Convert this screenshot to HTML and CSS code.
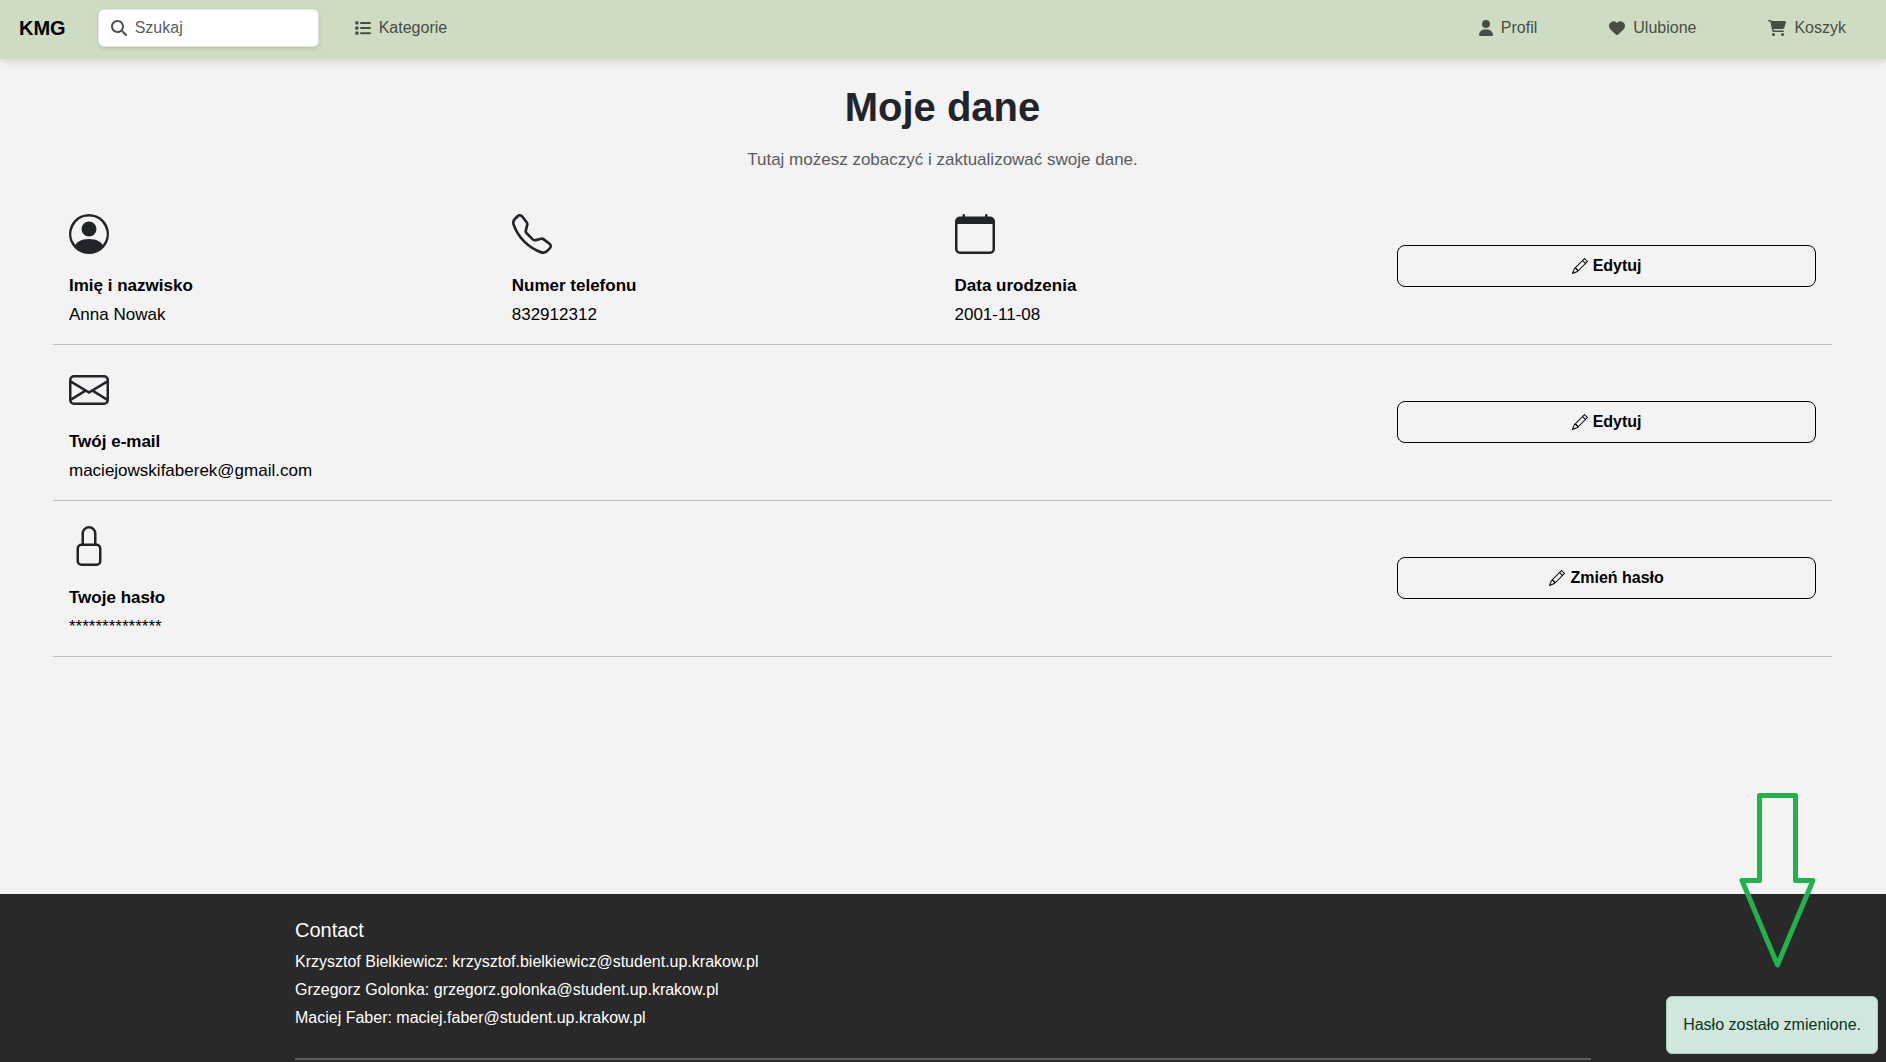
FILE: index.html
```html
<!DOCTYPE html>
<html lang="pl">
<head>
  <meta charset="utf-8">
  <meta name="viewport" content="width=device-width, initial-scale=1">
  <title>KMG – Moje dane</title>
  <link rel="stylesheet" href="styles.css">
</head>
<body>
  <svg class="sprite" aria-hidden="true">
    <symbol id="pencil" viewBox="0 0 16 16"><path d="M12.146.146a.5.5 0 0 1 .708 0l3 3a.5.5 0 0 1 0 .708l-10 10a.5.5 0 0 1-.168.11l-5 2a.5.5 0 0 1-.65-.65l2-5a.5.5 0 0 1 .11-.168zM11.207 2.5 13.5 4.793 14.793 3.5 12.5 1.207zm1.586 3L10.5 3.207 4 9.707V10h.5a.5.5 0 0 1 .5.5v.5h.5a.5.5 0 0 1 .5.5v.5h.293zm-9.761 5.175-.106.106-1.528 3.821 3.821-1.528.106-.106A.5.5 0 0 1 5 12.5V12h-.5a.5.5 0 0 1-.5-.5V11h-.5a.5.5 0 0 1-.468-.325"/></symbol>
  </svg>

  <header class="navbar">
    <a class="brand" href="#">KMG</a>
    <form class="search" role="search">
      <label class="search-label" for="search" aria-label="Szukaj">
        <svg class="nav-icon" viewBox="0 0 512 512" width="16" height="16"><path d="M416 208c0 45.900-14.900 88.300-40 122.700L502.600 457.400c12.500 12.500 12.500 32.800 0 45.300s-32.800 12.500-45.300 0L330.700 376c-34.400 25.200-76.800 40-122.700 40C93.100 416 0 322.900 0 208S93.100 0 208 0S416 93.100 416 208zM208 352a144 144 0 1 0 0-288 144 144 0 1 0 0 288z"/></svg>
      </label>
      <input class="search-input" id="search" type="search" placeholder="Szukaj">
    </form>
    <nav class="nav nav-start">
      <a class="nav-link" href="#">
        <svg class="nav-icon" viewBox="0 0 512 512" width="16" height="16"><rect x="8" y="40" width="104" height="104" rx="24"/><rect x="8" y="204" width="104" height="104" rx="24"/><rect x="8" y="368" width="104" height="104" rx="24"/><rect x="160" y="60" width="352" height="64" rx="32"/><rect x="160" y="224" width="352" height="64" rx="32"/><rect x="160" y="388" width="352" height="64" rx="32"/></svg>
        Kategorie
      </a>
    </nav>
    <nav class="nav nav-end">
      <a class="nav-link" href="#">
        <svg class="nav-icon" viewBox="0 0 448 512" width="14" height="16"><path d="M224 256A128 128 0 1 0 224 0a128 128 0 1 0 0 256zm-45.700 48C79.800 304 0 383.800 0 482.300C0 498.700 13.300 512 29.700 512H418.300c16.400 0 29.700-13.300 29.700-29.700C448 383.800 368.200 304 269.700 304H178.300z"/></svg>
        Profil
      </a>
      <a class="nav-link" href="#">
        <svg class="nav-icon" viewBox="0 0 512 512" width="16" height="16"><path d="M47.600 300.400L228.300 469.100c7.500 7 17.400 10.900 27.700 10.900s20.200-3.900 27.700-10.900L464.400 300.400c30.400-28.300 47.600-68 47.600-109.500v-5.800c0-69.900-50.500-129.500-119.400-141C347 36.500 300.600 51.400 268 84L256 96 244 84c-32.600-32.600-79-47.500-124.600-39.900C50.500 55.600 0 115.200 0 185.100v5.800c0 41.500 17.200 81.200 47.600 109.500z"/></svg>
        Ulubione
      </a>
      <a class="nav-link" href="#">
        <svg class="nav-icon" viewBox="0 0 576 512" width="18" height="16"><path d="M0 24C0 10.700 10.700 0 24 0H69.500c22 0 41.500 12.800 50.600 32h411c26.300 0 45.500 25 38.600 50.400l-41 152.300c-8.500 31.400-37 53.300-69.500 53.300H170.700l5.400 28.500c2.200 11.300 12.100 19.500 23.600 19.500H488c13.300 0 24 10.700 24 24s-10.700 24-24 24H199.700c-34.600 0-64.300-24.600-70.700-58.500L77.400 54.500c-.7-3.800-4-6.500-7.900-6.500H24C10.700 48 0 37.300 0 24zM128 464a48 48 0 1 1 96 0 48 48 0 1 1 -96 0zm336-48a48 48 0 1 1 0 96 48 48 0 1 1 0-96z"/></svg>
        Koszyk
      </a>
    </nav>
  </header>

  <main class="main">
    <h1 class="title">Moje dane</h1>
    <p class="lead">Tutaj możesz zobaczyć i zaktualizować swoje dane.</p>

    <section class="row">
      <div class="field">
        <svg class="field-icon" viewBox="0 0 16 16"><path d="M11 6a3 3 0 1 1-6 0 3 3 0 0 1 6 0"/><path fill-rule="evenodd" d="M0 8a8 8 0 1 1 16 0A8 8 0 0 1 0 8m8-7a7 7 0 0 0-5.468 11.370C3.242 11.226 4.805 10 8 10s4.757 1.225 5.468 2.370A7 7 0 0 0 8 1"/></svg>
        <h2 class="field-name">Imię i nazwisko</h2>
        <p class="field-value">Anna Nowak</p>
      </div>
      <div class="field">
        <svg class="field-icon" viewBox="0 0 16 16"><path d="M3.654 1.328a.678.678 0 0 0-1.015-.063L1.605 2.300c-.483.484-.661 1.169-.45 1.770a17.600 17.600 0 0 0 4.168 6.608 17.600 17.600 0 0 0 6.608 4.168c.601.211 1.286.033 1.770-.45l1.034-1.034a.678.678 0 0 0-.063-1.015l-2.307-1.794a.68.68 0 0 0-.58-.122l-2.190.547a1.750 1.750 0 0 1-1.657-.459L5.482 8.062a1.750 1.750 0 0 1-.46-1.657l.548-2.190a.68.68 0 0 0-.122-.58zM1.884.511a1.745 1.745 0 0 1 2.612.163L6.290 2.980c.329.423.445.974.315 1.494l-.547 2.190a.68.68 0 0 0 .178.643l2.457 2.457a.68.68 0 0 0 .644.178l2.189-.547a1.750 1.750 0 0 1 1.494.315l2.306 1.794c.829.645.905 1.870.163 2.611l-1.034 1.034c-.74.74-1.846 1.065-2.877.702a18.600 18.600 0 0 1-7.010-4.420 18.600 18.600 0 0 1-4.420-7.009c-.362-1.030-.037-2.137.703-2.877z"/></svg>
        <h2 class="field-name">Numer telefonu</h2>
        <p class="field-value">832912312</p>
      </div>
      <div class="field">
        <svg class="field-icon" viewBox="0 0 16 16"><path d="M3.500 0a.5.5 0 0 1 .5.5V1h8V.5a.5.5 0 0 1 1 0V1h1a2 2 0 0 1 2 2v11a2 2 0 0 1-2 2H2a2 2 0 0 1-2-2V3a2 2 0 0 1 2-2h1V.5a.5.5 0 0 1 .5-.5M1 4v10a1 1 0 0 0 1 1h12a1 1 0 0 0 1-1V4z"/></svg>
        <h2 class="field-name">Data urodzenia</h2>
        <p class="field-value">2001-11-08</p>
      </div>
      <button class="btn" type="button"><svg class="btn-icon"><use href="#pencil"/></svg>Edytuj</button>
    </section>

    <section class="row">
      <div class="field">
        <svg class="field-icon" viewBox="0 0 16 16"><path d="M0 4a2 2 0 0 1 2-2h12a2 2 0 0 1 2 2v8a2 2 0 0 1-2 2H2a2 2 0 0 1-2-2zm2-1a1 1 0 0 0-1 1v.217l7 4.200 7-4.200V4a1 1 0 0 0-1-1zm13 2.383-4.708 2.825L15 11.105zm-.034 6.876-5.640-3.471L8 9.583l-1.326-.795-5.640 3.470A1 1 0 0 0 2 13h12a1 1 0 0 0 .966-.741M1 11.105l4.708-2.897L1 5.383z"/></svg>
        <h2 class="field-name">Twój e-mail</h2>
        <p class="field-value">maciejowskifaberek@gmail.com</p>
      </div>
      <button class="btn" type="button"><svg class="btn-icon"><use href="#pencil"/></svg>Edytuj</button>
    </section>

    <section class="row">
      <div class="field">
        <svg class="field-icon" viewBox="0 0 16 16"><path fill-rule="evenodd" d="M8 1a2 2 0 0 1 2 2v4H6V3a2 2 0 0 1 2-2m3 6V3a3 3 0 0 0-6 0v4a2 2 0 0 0-2 2v5a2 2 0 0 0 2 2h6a2 2 0 0 0 2-2V9a2 2 0 0 0-2-2M5 8h6a1 1 0 0 1 1 1v5a1 1 0 0 1-1 1H5a1 1 0 0 1-1-1V9a1 1 0 0 1 1-1"/></svg>
        <h2 class="field-name">Twoje hasło</h2>
        <p class="field-value">**************</p>
      </div>
      <button class="btn" type="button"><svg class="btn-icon"><use href="#pencil"/></svg>Zmień hasło</button>
    </section>
  </main>

  <footer class="footer">
    <div class="container">
      <h2 class="footer-title">Contact</h2>
      <p class="footer-line">Krzysztof Bielkiewicz: krzysztof.bielkiewicz@student.up.krakow.pl</p>
      <p class="footer-line">Grzegorz Golonka: grzegorz.golonka@student.up.krakow.pl</p>
      <p class="footer-line">Maciej Faber: maciej.faber@student.up.krakow.pl</p>
      <hr class="footer-rule">
    </div>
  </footer>

  <svg class="arrow" viewBox="0 0 80 177" aria-hidden="true"><path d="M21.500 3.500H57.500V88.500H75L39.500 173 4 88.500H21.500Z"/></svg>
  <div class="toast" role="alert">Hasło zostało zmienione.</div>
</body>
</html>
```
FILE: styles.css
```css
* {
  box-sizing: border-box;
}

body {
  margin: 0;
  min-height: 100vh;
  display: flex;
  flex-direction: column;
  background: #f3f3f3;
  color: #212529;
  font-family: "Liberation Sans", Arial, sans-serif;
  font-size: 16px;
  line-height: 24px;
}

h1, h2, p {
  margin: 0;
}

svg {
  flex: none;
  fill: currentColor;
}

.sprite {
  position: absolute;
  width: 0;
  height: 0;
}

/* Top bar */
.navbar {
  display: flex;
  align-items: center;
  padding: 9px 40px 12px 19px;
  background: #cfdcc4;
  box-shadow: 0 2px 8px rgba(0, 0, 0, 0.15);
}

.brand {
  color: #000;
  font-size: 20px;
  font-weight: 700;
  text-decoration: none;
}

.search {
  display: flex;
  align-items: center;
  width: 221px;
  height: 38px;
  margin-left: 32px;
  border: 1px solid #dee2e6;
  border-radius: 6px;
  background: #fff;
  box-shadow: 0 2px 4px rgba(0, 0, 0, 0.1);
}

.search-label {
  display: flex;
  padding: 0 8px 0 12px;
  color: #4d5154;
}

.search-input {
  flex: 1;
  min-width: 0;
  padding: 0;
  border: 0;
  outline: 0;
  background: transparent;
  color: #212529;
  font: inherit;
}

.search-input::placeholder {
  color: #595c5f;
  opacity: 1;
}

.nav {
  display: flex;
  gap: 72px;
}

.nav-start {
  margin-left: 36px;
}

.nav-end {
  margin-left: auto;
}

.nav-link {
  display: flex;
  align-items: center;
  gap: 8px;
  color: #484d45;
  text-decoration: none;
}

/* Account data */
.main {
  flex: 1;
  padding: 24px 54px 24px 53px;
}

.title {
  font-size: 40px;
  line-height: 48px;
  text-align: center;
}

.lead {
  margin: 16px 0;
  color: #595c5f;
  font-size: 17px;
  line-height: 26px;
  text-align: center;
}

.row {
  display: grid;
  grid-template-columns: repeat(4, 1fr);
  column-gap: 24px;
  align-items: center;
  padding: 0 16px 2px;
  border-bottom: 1px solid #c2c2c2;
}

.field {
  padding: 25px 0 13px;
  color: #000;
  font-size: 17px;
  line-height: 29px;
}

.field-icon {
  display: block;
  width: 40px;
  height: 40px;
  margin-bottom: 17px;
  color: #212529;
}

.field-name {
  font-size: 17px;
}

.btn {
  grid-column: 4;
  display: flex;
  align-items: center;
  justify-content: center;
  gap: 5px;
  height: 42px;
  border: 1px solid #000;
  border-radius: 8px;
  background: transparent;
  color: #000;
  font: inherit;
  font-weight: 700;
}

.btn-icon {
  width: 16px;
  height: 16px;
}

/* Footer */
.footer {
  padding: 24px 0 2px;
  background: #292929;
  color: #fff;
}

.container {
  max-width: 1320px;
  margin: 0 auto;
  padding: 0 12px;
}

.footer-title {
  margin-bottom: 6px;
  font-size: 20px;
  font-weight: 400;
}

.footer-line {
  line-height: 28px;
}

.footer-rule {
  height: 2px;
  margin: 26px 0 0;
  border: 0;
  background: #5f5f5f;
}

/* Overlays */
.arrow {
  position: fixed;
  right: 68px;
  bottom: 93px;
  width: 80px;
  height: 177px;
  fill: none;
  stroke: #22b14c;
  stroke-width: 5;
  stroke-linejoin: round;
}

.toast {
  position: fixed;
  right: 8px;
  bottom: 8px;
  padding: 16px;
  border: 1px solid #a3cfbb;
  border-radius: 6px;
  background: #d1e7dd;
  color: #0a3622;
}
```
